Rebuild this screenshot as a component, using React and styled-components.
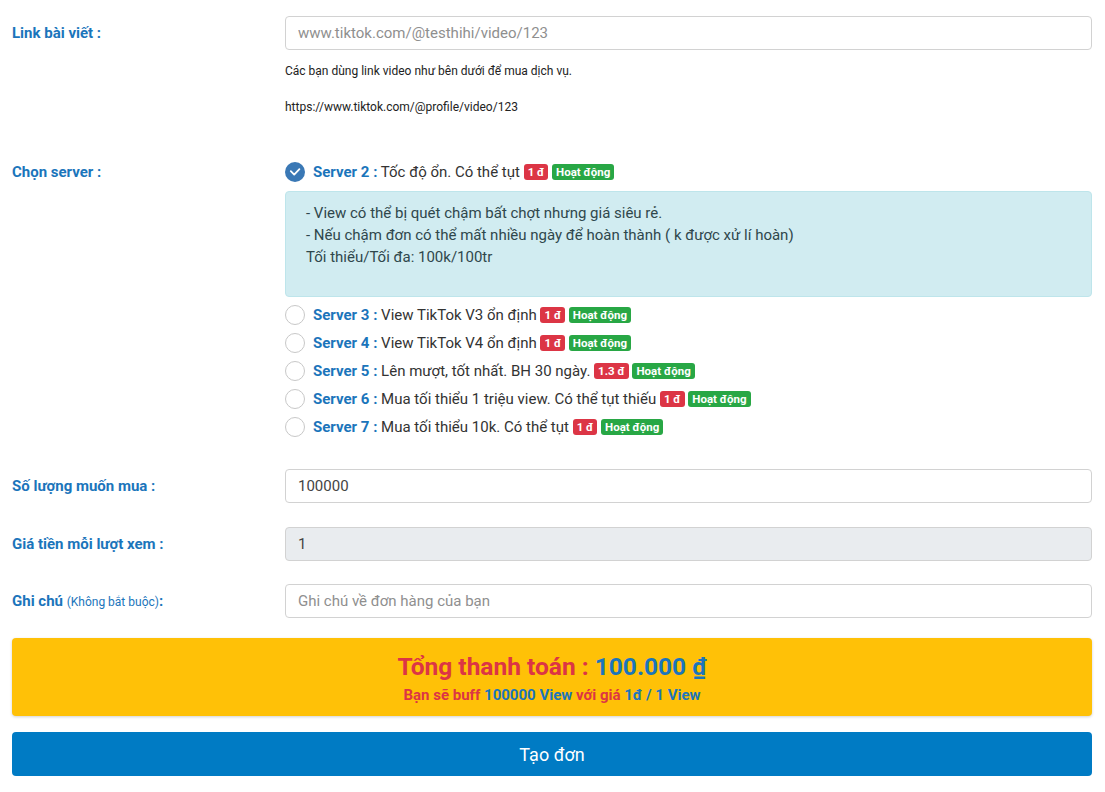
import styled, { createGlobalStyle } from 'styled-components';

const BLUE = '#1b75bb';
const RED = '#dc3545';
const GREEN = '#28a745';

const GlobalStyle = createGlobalStyle`
  * { box-sizing: border-box; }
  body {
    margin: 0;
    background: #fff;
    color: #333;
    font-family: Roboto, "Noto Sans", "Liberation Sans", sans-serif;
  }
`;

const servers = [
  { id: 2, text: 'Tốc độ ổn. Có thể tụt', price: '1 đ', checked: true },
  { id: 3, text: 'View TikTok V3 ổn định', price: '1 đ' },
  { id: 4, text: 'View TikTok V4 ổn định', price: '1 đ' },
  { id: 5, text: 'Lên mượt, tốt nhất. BH 30 ngày.', price: '1.3 đ' },
  { id: 6, text: 'Mua tối thiểu 1 triệu view. Có thể tụt thiếu', price: '1 đ' },
  { id: 7, text: 'Mua tối thiểu 10k. Có thể tụt', price: '1 đ' },
];

function CheckIcon() {
  return (
    <svg width="20" height="20" viewBox="0 0 20 20">
      <circle cx="10" cy="10" r="10" fill="#3a78b5" />
      <path d="M5.8 9.2 L9.2 12.6 L14.4 7.2" fill="none" stroke="#fff" strokeWidth="1.8" strokeLinecap="round" strokeLinejoin="round" />
    </svg>
  );
}

function App() {
  return (
    <Page>
      <GlobalStyle />
      <Row $mb={42}>
        <Label>Link bài viết :</Label>
        <Field>
          <Input placeholder="www.tiktok.com/@testhihi/video/123" />
          <Help $mt={12}>Các bạn dùng link video như bên dưới để mua dịch vụ.</Help>
          <Help $mt={18}>https://www.tiktok.com/@profile/video/123</Help>
        </Field>
      </Row>

      <Row $mb={28}>
        <Label $pt={4}>Chọn server :</Label>
        <Field>
          {servers.map((s) => (
            <div key={s.id}>
              <ServerItem>
                {s.checked ? <CheckIcon /> : <Radio />}
                <ServerText>
                  <ServerName>Server {s.id} :</ServerName> {s.text}{' '}
                  <Badge $bg={RED}>{s.price}</Badge> <Badge $bg={GREEN}>Hoạt động</Badge>
                </ServerText>
              </ServerItem>
              {s.checked && (
                <InfoBox>
                  - View có thể bị quét chậm bất chợt nhưng giá siêu rẻ.
                  <br />
                  - Nếu chậm đơn có thể mất nhiều ngày để hoàn thành ( k được xử lí hoàn)
                  <br />
                  Tối thiểu/Tối đa: 100k/100tr
                </InfoBox>
              )}
            </div>
          ))}
        </Field>
      </Row>

      <Row $mb={24}>
        <Label>Số lượng muốn mua :</Label>
        <Field>
          <Input defaultValue="100000" />
        </Field>
      </Row>

      <Row $mb={23}>
        <Label>Giá tiền mỗi lượt xem :</Label>
        <Field>
          <Input defaultValue="1" disabled />
        </Field>
      </Row>

      <Row $mb={20}>
        <Label>
          Ghi chú <Small>(Không bắt buộc)</Small>:
        </Label>
        <Field>
          <Input placeholder="Ghi chú về đơn hàng của bạn" />
        </Field>
      </Row>

      <TotalBox>
        <TotalTitle>
          Tổng thanh toán : <Blue>100.000 ₫</Blue>
        </TotalTitle>
        <TotalSub>
          Bạn sẽ buff <Blue>100000 View</Blue> với giá <Blue>1đ / 1 View</Blue>
        </TotalSub>
      </TotalBox>

      <SubmitButton>Tạo đơn</SubmitButton>
    </Page>
  );
}

const Page = styled.div`
  padding: 16px 13px 16px 12px;
`;

const Row = styled.div`
  display: grid;
  grid-template-columns: 273px 1fr;
  align-items: start;
  margin-bottom: ${({ $mb }) => $mb}px;
`;

const Label = styled.div`
  color: ${BLUE};
  font-size: 15px;
  font-weight: 700;
  line-height: 20px;
  padding-top: ${({ $pt }) => ($pt != null ? $pt : 7)}px;
`;

const Small = styled.span`
  font-size: 12px;
  font-weight: 400;
`;

const Field = styled.div`
  display: flex;
  flex-direction: column;
`;

const Input = styled.input`
  width: 100%;
  height: 34px;
  padding: 0 12px;
  border: 1px solid #d2d2d2;
  border-radius: 4px;
  font-family: inherit;
  font-size: 15px;
  color: #444;
  background: #fff;
  outline: none;

  &::placeholder {
    color: #8f8f8f;
  }

  &:disabled {
    background: #e9ecef;
    color: #444;
  }
`;

const Help = styled.p`
  margin: ${({ $mt }) => $mt}px 0 0;
  font-size: 12px;
  line-height: 18px;
  color: #222;
`;

const ServerItem = styled.div`
  display: flex;
  align-items: center;
  gap: 8px;
  height: 28px;
`;

const Radio = styled.span`
  width: 20px;
  height: 20px;
  border-radius: 50%;
  border: 1px solid #c8c8c8;
  background: #fff;
  flex-shrink: 0;
`;

const ServerText = styled.span`
  font-size: 15px;
  color: #333;
  white-space: nowrap;
`;

const ServerName = styled.b`
  color: ${BLUE};
  font-weight: 700;
`;

const Badge = styled.span`
  display: inline-block;
  background: ${({ $bg }) => $bg};
  color: #fff;
  font-size: 11.5px;
  font-weight: 700;
  line-height: 16px;
  padding: 0 4px;
  border-radius: 3px;
  vertical-align: 1px;
`;

const InfoBox = styled.div`
  margin: 5px 0 4px;
  height: 106px;
  padding: 10px 20px;
  background: #d1ecf1;
  border: 1px solid #bee5eb;
  border-radius: 4px;
  color: #2f474c;
  font-size: 15px;
  line-height: 22px;
`;

const TotalBox = styled.div`
  background: #ffc107;
  border-radius: 4px;
  box-shadow: 0 1px 3px rgba(0, 0, 0, 0.18);
  height: 78px;
  padding-top: 13px;
  text-align: center;
  margin-bottom: 16px;
`;

const TotalTitle = styled.div`
  color: ${RED};
  font-size: 24.5px;
  font-weight: 700;
  line-height: 32px;
`;

const TotalSub = styled.div`
  color: ${RED};
  font-size: 15px;
  font-weight: 700;
  line-height: 20px;
  margin-top: 2px;
`;

const Blue = styled.span`
  color: ${BLUE};
`;

const SubmitButton = styled.button`
  display: block;
  width: 100%;
  height: 44px;
  border: none;
  border-radius: 4px;
  background: #007bc4;
  color: #fff;
  font-family: inherit;
  font-size: 18px;
`;

export default App;
